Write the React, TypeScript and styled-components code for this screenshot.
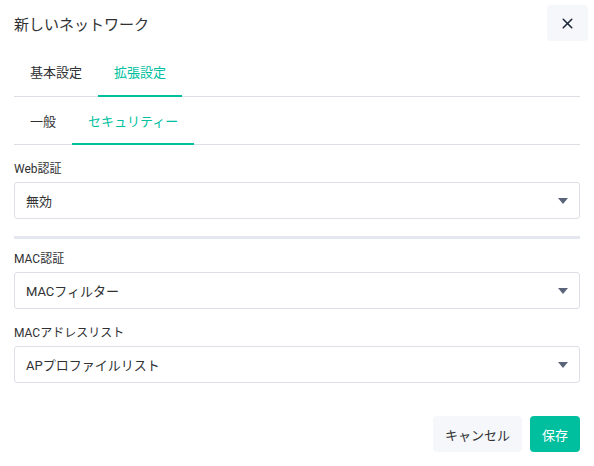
import styled, { createGlobalStyle } from "styled-components";
import { X } from "lucide-react";

const GlobalStyle = createGlobalStyle`
  body {
    margin: 0;
    background: #fff;
    font-family: Roboto, "Noto Sans CJK JP", sans-serif;
    color: #303133;
  }
`;

const TEAL = "#00bf9f";

export default function App() {
  return (
    <>
      <GlobalStyle />
      <Dialog>
        <Header>
          <Title>新しいネットワーク</Title>
          <CloseButton aria-label="close">
            <X size={17} strokeWidth={2.2} color="#1c2738" />
          </CloseButton>
        </Header>

        <TabBar height={49}>
          <Tab>基本設定</Tab>
          <Tab active>拡張設定</Tab>
        </TabBar>
        <TabBar height={47}>
          <Tab>一般</Tab>
          <Tab active>セキュリティー</Tab>
        </TabBar>

        <Body>
          <Field>
            <Label>Web認証</Label>
            <Select>
              <span>無効</span>
              <Caret />
            </Select>
          </Field>

          <ThickDivider />

          <Field>
            <Label>MAC認証</Label>
            <Select>
              <span>MACフィルター</span>
              <Caret />
            </Select>
          </Field>
          <Field>
            <Label>MACアドレスリスト</Label>
            <Select>
              <span>APプロファイルリスト</span>
              <Caret />
            </Select>
          </Field>
        </Body>

        <Footer>
          <Button>キャンセル</Button>
          <Button primary>保存</Button>
        </Footer>
      </Dialog>
    </>
  );
}

function Caret() {
  return (
    <CaretIcon width="10" height="6" viewBox="0 0 10 6">
      <path d="M0 0 L10 0 L5 6 Z" fill="#5b6579" />
    </CaretIcon>
  );
}

const Dialog = styled.div`
  width: 594px;
  display: flex;
  flex-direction: column;
  padding: 0 14px;
  box-sizing: border-box;
`;

const Header = styled.div`
  display: flex;
  align-items: center;
  justify-content: space-between;
  padding-top: 5px;
  margin-right: -8px;
  margin-bottom: 6px;
`;

const Title = styled.div`
  font-size: 15px;
  color: #303133;
`;

const CloseButton = styled.button`
  width: 41px;
  height: 36px;
  border: none;
  border-radius: 4px;
  background: #f5f7fa;
  display: grid;
  place-items: center;
  padding: 0;
  cursor: pointer;
`;

const TabBar = styled.div<{ height: number }>`
  display: flex;
  height: ${(p) => p.height}px;
  border-bottom: 1px solid #dcdfe6;
`;

const Tab = styled.div<{ active?: boolean }>`
  padding: 0 16px;
  display: flex;
  align-items: center;
  font-size: 13px;
  color: ${(p) => (p.active ? TEAL : "#303133")};
  border-bottom: 2px solid ${(p) => (p.active ? TEAL : "transparent")};
  margin-bottom: -1px;
  box-sizing: border-box;
  cursor: pointer;
`;

const Body = styled.div`
  padding-top: 14px;
  display: flex;
  flex-direction: column;
`;

const Field = styled.div`
  display: flex;
  flex-direction: column;
  margin-bottom: 14px;

  &:first-child {
    margin-bottom: 17px;
  }
`;

const Label = styled.div`
  font-size: 12px;
  line-height: 20px;
  color: #303133;
  margin-bottom: 3px;
`;

const Select = styled.div`
  height: 37px;
  box-sizing: border-box;
  border: 1px solid #dcdfe6;
  border-radius: 3px;
  display: flex;
  align-items: center;
  justify-content: space-between;
  padding: 0 11px 0 11px;
  font-size: 13px;
  color: #303133;
`;

const CaretIcon = styled.svg`
  flex: none;
`;

const ThickDivider = styled.div`
  height: 3px;
  background: #e4e7ed;
  margin-bottom: 10px;
`;

const Footer = styled.div`
  display: flex;
  justify-content: flex-end;
  gap: 8px;
  margin-top: 19px;
`;

const Button = styled.button<{ primary?: boolean }>`
  height: 36px;
  padding: 0 12px;
  border: none;
  border-radius: 4px;
  font-family: Roboto, "Noto Sans CJK JP", sans-serif;
  font-size: 13px;
  background: ${(p) => (p.primary ? TEAL : "#f5f7fa")};
  color: ${(p) => (p.primary ? "#fff" : "#303133")};
  cursor: pointer;
`;
